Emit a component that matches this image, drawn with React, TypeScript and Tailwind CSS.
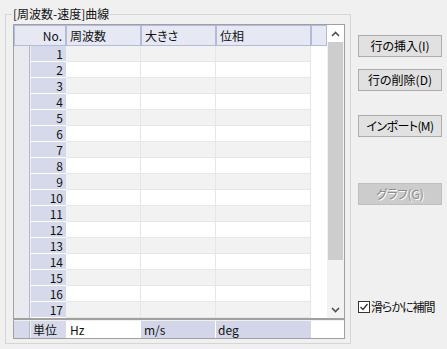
import React from "react";

const rows = Array.from({ length: 17 }, (_, i) => i + 1);

function Btn({ label, disabled, tight }: { label: string; disabled?: boolean; tight?: boolean }) {
  return (
    <div
      className={
        "h-[22px] w-[84px] flex items-center justify-center border text-[12px] leading-[14px] [font-feature-settings:'palt'] " +
        (tight ? "tracking-[-0.6px] " : "") +
        (disabled
          ? "bg-[#cccccc] border-[#bfbfbf] text-[#8c8c8c] [text-shadow:1px_1px_0_#ffffff]"
          : "bg-[#e1e1e1] border-[#adadad] text-[#000000]")
      }
    >
      {label}
    </div>
  );
}

export default function App() {
  return (
    <div
      className="w-[447px] h-[349px] bg-[#f0f0f0] flex text-[12px] text-[#111111] overflow-hidden"
      style={{ fontFamily: '"Noto Sans CJK JP", "Noto Sans", sans-serif' }}
    >
      {/* group box */}
      <div className="relative ml-[5px] mt-[14px] w-[346px] h-[330px] border border-[#d5d5d5] pt-[9px] pl-[7px]">
        <span className="absolute left-[6px] -top-[8px] px-[1px] bg-[#f0f0f0] leading-[14px]">
          [周波数-速度]曲線
        </span>

        {/* grid */}
        <div className="w-[332px] h-[315px] border border-[#a0a0a0] flex flex-col bg-[#f0f0f0]">
          <div className="flex h-[293px]">
            {/* table area */}
            <div className="w-[313px] flex flex-col">
              {/* header */}
              <div className="flex h-[21px] bg-white">
                <div className="w-[52px] border border-[#b3bbd8] bg-[#e6e8f4] flex items-center justify-end pr-[3px] leading-[14px]">
                  No.
                </div>
                <div className="w-[75px] border border-[#b3bbd8] bg-[#e6e8f4] flex items-center pl-[3px] leading-[14px]">
                  周波数
                </div>
                <div className="w-[75px] border border-[#b3bbd8] bg-[#e6e8f4] flex items-center pl-[3px] leading-[14px] [font-feature-settings:'palt']">
                  大きさ
                </div>
                <div className="w-[95px] border border-[#b3bbd8] bg-[#e6e8f4] flex items-center pl-[3px] leading-[14px]">
                  位相
                </div>
                <div className="w-[16px] border border-[#b3bbd8] bg-[#e6e8f4]" />
              </div>
              {/* rows */}
              {rows.map((n) => {
                const cell =
                  (n % 2 === 1 ? "bg-[#f2f2f2]" : "bg-white") +
                  " border-r border-b border-[#e2e8e2]";
                return (
                  <div key={n} className="flex h-[16px]">
                    <div className="w-[16px] bg-[#e9e9f0] border-r border-[#b4b8c8]" />
                    <div className="w-[1px] bg-[#f0f0f0]" />
                    <div className="w-[35px] bg-[#d6d9ea] border-b border-white flex items-center justify-end pr-[3px] leading-[15px]">
                      {n}
                    </div>
                    <div className={"w-[75px] " + cell} />
                    <div className={"w-[75px] " + cell} />
                    <div className={"w-[95px] " + cell} />
                    <div className="w-[16px] bg-white" />
                  </div>
                );
              })}
            </div>
            {/* scrollbar */}
            <div className="w-[17px] bg-[#f2f2f2] flex flex-col items-center">
              <div className="h-[17px] w-full bg-white flex items-center justify-center">
                <svg width="9" height="6" viewBox="0 0 9 6">
                  <path d="M1 5 L4.5 1.5 L8 5" fill="none" stroke="#505050" strokeWidth="1.6" />
                </svg>
              </div>
              <div className="w-[15px] h-[218px] bg-[#cdcdcd]" />
              <div className="flex-1" />
              <div className="h-[17px] w-full flex items-center justify-center">
                <svg width="9" height="6" viewBox="0 0 9 6">
                  <path d="M1 1 L4.5 4.5 L8 1" fill="none" stroke="#505050" strokeWidth="1.6" />
                </svg>
              </div>
            </div>
          </div>
          {/* separator */}
          <div className="h-[3px] border-t-2 border-[#a0a0a0] bg-[#f0f0f0]" />
          {/* footer */}
          <div className="flex h-[17px] bg-white">
            <div className="w-[16px] bg-[#d6d9ea] border-r border-[#b4b8c8]" />
            <div className="w-[1px] bg-[#f0f0f0]" />
            <div className="w-[35px] bg-[#d6d9ea] flex items-center pl-[2px] leading-[15px]">単位</div>
            <div className="w-[75px] bg-white flex items-center pl-[4px] leading-[15px]">Hz</div>
            <div className="w-[75px] bg-[#d3d6e8] border-r border-white flex items-center pl-[3px] leading-[15px]">
              m/s
            </div>
            <div className="w-[95px] bg-[#d3d6e8] flex items-center pl-[2px] leading-[15px]">deg</div>
            <div className="flex-1 bg-white" />
          </div>
        </div>
      </div>

      {/* right panel */}
      <div className="ml-[7px] w-[84px] flex flex-col pt-[35px]">
        <Btn label="行の挿入(I)" />
        <div className="h-[12px]" />
        <Btn label="行の削除(D)" />
        <div className="h-[24px]" />
        <Btn label="インポート(M)" tight />
        <div className="h-[46px]" />
        <Btn label="グラフ(G)" disabled />
        <div className="h-[95px]" />
        <div className="flex items-center h-[13px]">
          <div className="w-[12px] h-[12px] border border-[#333333] bg-white flex items-center justify-center">
            <svg width="10" height="10" viewBox="0 0 10 10">
              <path d="M1.5 5 L4 7.5 L8.5 2" fill="none" stroke="#333333" strokeWidth="1.3" />
            </svg>
          </div>
          <span className="ml-[1px] leading-[14px] whitespace-nowrap [font-feature-settings:'palt'] tracking-[-1px]">
            滑らかに補間
          </span>
        </div>
      </div>
    </div>
  );
}
